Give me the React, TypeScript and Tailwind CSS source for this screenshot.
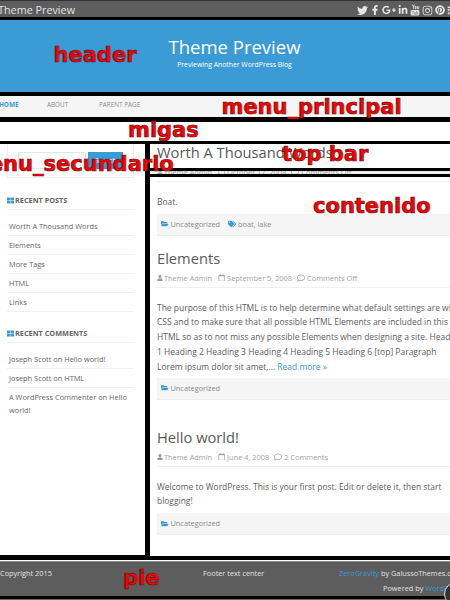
import React from "react";
import {
  FaTwitter, FaFacebookF, FaGooglePlusG, FaLinkedinIn, FaInstagram, FaPinterest, FaRss,
  FaFolderOpen, FaTags, FaUser, FaRegCalendar, FaRegComment, FaThLarge,
} from "react-icons/fa";

function YouTube() {
  return (
    <svg width="10" height="12" viewBox="0 0 18 22" fill="none" stroke="currentColor">
      <path d="M4 1l2 4v4M8 1L6 5M9 4.500h2v4H9zM13.500 4v4.500h2.500V4" strokeWidth="1.500" />
      <rect x="1" y="11" width="16" height="10" rx="2" fill="currentColor" stroke="none" />
      <path d="M3 13.500h4M5 13.500V19M8 15v4h2v-4M12 13v6h2v-4h-2" stroke="#777" strokeWidth="1" />
    </svg>
  );
}

function Meta({ date, comments }: { date: string; comments: string }) {
  return (
    <div className="flex h-[14px] items-center whitespace-nowrap text-[7.4px] leading-[14px] text-[#a3a3a3]">
      <FaUser className="mr-[1px] size-[6px] text-[#999]" />
      <span>Theme Admin</span>
      <FaRegCalendar className="mr-[2px] ml-[5.500px] size-[7.500px]" />
      <span>{date}</span>
      <FaRegComment className="mr-[2px] ml-[5px] size-[8px]" />
      <span>{comments}</span>
    </div>
  );
}

function Categories({ tags }: { tags?: string }) {
  return (
    <div className="flex h-[22px] shrink-0 items-center border-b border-[#eee] bg-[#f5f5f5] pl-[4px] text-[7.35px] text-[#8c8c8c]">
      <FaFolderOpen className="mr-[2px] size-[7.500px] text-[#3a9bd5]" />
      <span>Uncategorized</span>
      {tags && (
        <>
          <FaTags className="mr-[2px] ml-[8px] size-[8px] text-[#3a9bd5]" />
          <span>{tags}</span>
        </>
      )}
    </div>
  );
}

function Title({ children }: { children: React.ReactNode }) {
  return <h2 className="h-[20px] whitespace-nowrap text-[14.7px] leading-[20px] text-[#5a5a5a]">{children}</h2>;
}

function Widget({ title, items }: { title: string; items: string[] }) {
  return (
    <section>
      <h3 className="flex h-[17px] items-center border-b border-[#f0f0f0] text-[7.3px] font-bold whitespace-nowrap text-[#666]">
        <FaThLarge className="mr-[1.500px] size-[7px] text-[#3a9bd5]" />
        {title}
      </h3>
      <ul className="mt-[7.500px] text-[7.4px] leading-[13px] text-[#666]">
        {items.map((item) => (
          <li key={item} className="border-b border-[#f0f0f0] pt-[3px] pb-[2px] pl-[2.500px]">{item}</li>
        ))}
      </ul>
    </section>
  );
}

function Label({ place, children }: { place: string; children: string }) {
  return (
    <span className={"absolute z-10 font-['DejaVu_Sans'] text-[21px] leading-[24px] font-bold whitespace-nowrap text-[#ff0000] [-webkit-text-stroke:0.7px_#5c1414] " + place}>
      {children}
    </span>
  );
}

export default function App() {
  return (
    <div className="relative flex h-[600px] w-[450px] flex-col overflow-hidden bg-white font-['Open_Sans',sans-serif]">
      <header className="flex h-[17px] shrink-0 items-center justify-between border-t border-[#303139] bg-[#5d5d5d] text-[#e0e0e0]">
        <span className="-ml-[2px] pt-[2px] text-[10.8px] whitespace-nowrap">Theme Preview</span>
        <div className="-mr-[6px] flex shrink-0 items-center pt-[2px] text-[#e5e5e5]">
          <FaTwitter className="mr-[2px]" size={11} />
          <FaFacebookF className="mr-[2px]" size={10} />
          <FaGooglePlusG className="mr-[2px]" size={14} />
          <FaLinkedinIn className="mr-[2px]" size={10} />
          <span className="mr-[2px]"><YouTube /></span>
          <FaInstagram className="mr-[2px]" size={11} />
          <FaPinterest className="mr-[2px]" size={10} />
          <FaRss size={9} />
        </div>
      </header>

      <div className="flex h-[79px] shrink-0 flex-col items-center border-t-[3px] border-b-[4px] border-black bg-[#3a9bd5] pt-[15px] pl-[19px] text-white">
        <h1 className="text-[18.5px] leading-[24px] whitespace-nowrap">Theme Preview</h1>
        <p className="text-[6.85px] leading-[11px] whitespace-nowrap">Previewing Another WordPress Blog</p>
      </div>

      <nav className="flex h-[26px] shrink-0 border-b-[5px] border-black bg-[#f5f5f5] pt-[3px] text-[6.35px] leading-[11px] text-[#8c8c8c]">
        <span className="w-[47px] font-bold text-[#3a9bd5]"><span className="-ml-[1px]">HOME</span></span>
        <span className="w-[52px]">ABOUT</span>
        <span>PARENT PAGE</span>
      </nav>

      <div className="h-[22px] shrink-0 border-b-[3px] border-black" />

      <div className="flex h-[416px] shrink-0">
        <aside className="flex w-[150px] shrink-0 flex-col border-r-[5px] border-b-[5px] border-black pr-[11px] pl-[6.500px]">
          <div className="flex h-[34px] shrink-0 gap-[2px] border border-t-0 border-[#eee] px-[10px] pt-[8px]">
            <div className="h-[17px] w-[69px] border border-[#e6e6e6]" />
            <div className="h-[17px] w-[35px] bg-[#3a9bd5] text-center text-[7px] leading-[17px] text-white">Search</div>
          </div>
          <div className="mt-[14.500px]">
            <Widget title="RECENT POSTS" items={["Worth A Thousand Words", "Elements", "More Tags", "HTML", "Links"]} />
          </div>
          <div className="mt-[13.500px]">
            <Widget title="RECENT COMMENTS" items={["Joseph Scott on Hello world!", "Joseph Scott on HTML"]} />
            <p className="pt-[3px] pl-[2.500px] text-[7.4px] leading-[13px] whitespace-nowrap text-[#666]">A WordPress Commenter on Hello<br />world!</p>
          </div>
        </aside>

        <main className="flex min-w-0 flex-1 flex-col">
          <div className="h-[27px] shrink-0 overflow-hidden border-b-[3px] border-black pl-[7px]">
            <div className="-mt-[2px]"><Title>Worth A Thousand Words</Title></div>
          </div>
          <div className="h-[3px] shrink-0 overflow-hidden bg-[#eee] pl-[7px]">
            <div className="-mt-[6px]"><Meta date="October 17, 2008" comments="Comments Off" /></div>
          </div>
          <div className="flex h-[386px] shrink-0 flex-col overflow-hidden border-t-[3px] border-b-[4px] border-black pl-[7px] text-[8.48px] leading-[14.7px] text-[#5e5e5e]">
            <div className="h-[5px] shrink-0 border-b border-[#f3f3f3]" />
            <p className="mt-[13px] mb-[4px]">Boat.</p>
            <Categories tags="boat, lake" />
            <div className="mt-[12px]"><Title>Elements</Title></div>
            <div className="mt-[3px] h-[17px] shrink-0 border-b border-[#f0f0f0]"><Meta date="September 5, 2008" comments="Comments Off" /></div>
            <p className="mt-[13px] mb-[3.500px] h-[73.500px] shrink-0 whitespace-nowrap">
              The purpose of this HTML is to help determine what default settings are with<br />
              CSS and to make sure that all possible HTML Elements are included in this<br />
              HTML so as to not miss any possible Elements when designing a site. Heading<br />
              1 Heading 2 Heading 3 Heading 4 Heading 5 Heading 6 [top] Paragraph<br />
              Lorem ipsum dolor sit amet,... <span className="text-[#3a9bd5]">Read more »</span>
            </p>
            <Categories />
            <div className="mt-[27px]"><Title>Hello world!</Title></div>
            <div className="mt-[3px] h-[17px] shrink-0 border-b border-[#f0f0f0]"><Meta date="June 4, 2008" comments="2 Comments" /></div>
            <p className="mt-[13px] mb-[4px] shrink-0 whitespace-nowrap text-[8.45px]">
              Welcome to WordPress. This is your first post. Edit or delete it, then start<br />blogging!
            </p>
            <Categories />
          </div>
        </main>
      </div>

      <footer className="mt-px grid h-[38px] shrink-0 grid-cols-[203px_136px_1fr] border-t border-b-[3px] border-t-[#888] border-b-black bg-[#5d5d5d] pt-[4px] text-[7.35px] leading-[15px] whitespace-nowrap text-[#e2e2e2]">
        <span>Copyright 2015</span>
        <span>Footer text center</span>
        <div>
          <p><span className="text-[#3a9bd5]">ZeroGravity</span> by GalussoThemes.com</p>
          <p className="pl-[44px]">Powered by <span className="text-[#3a9bd5]">WordPress</span></p>
        </div>
      </footer>
      <div className="h-px shrink-0 bg-[#666]" />
      <div className="absolute top-[582px] left-[444px] size-[24px] rounded-full border border-[#ddd] bg-[#333]" />

      <Label place="left-[53.5px] top-[43px]">header</Label>
      <Label place="left-[221.5px] top-[95px]">menu_principal</Label>
      <Label place="left-[128px] top-[118px]">migas</Label>
      <Label place="left-[-33px] top-[152px]">menu_secundario</Label>
      <Label place="left-[282px] top-[142px]">top bar</Label>
      <Label place="left-[313px] top-[194px]">contenido</Label>
      <Label place="left-[123px] top-[566px]">pie</Label>
    </div>
  );
}
